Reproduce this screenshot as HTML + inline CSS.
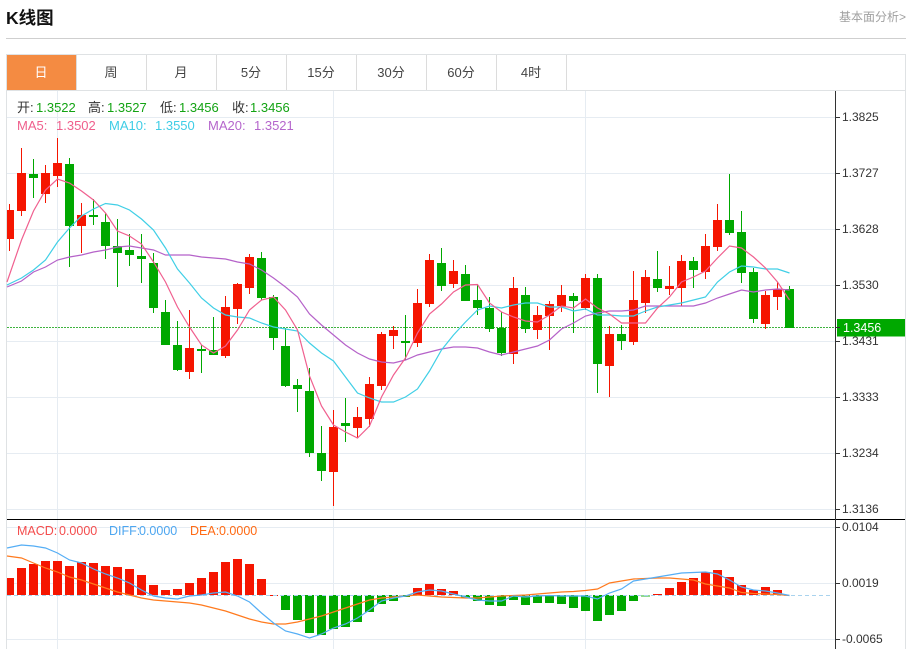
<!DOCTYPE html>
<html lang="zh"><head><meta charset="utf-8"><title>K线图</title>
<style>
html,body{margin:0;padding:0;background:#fff;width:911px;height:649px;overflow:hidden}
svg{display:block;position:absolute;left:0;top:0}
text{font-family:"Liberation Sans","Noto Sans CJK SC",sans-serif}
</style></head><body>
<svg width="911" height="649" viewBox="0 0 911 649" xmlns="http://www.w3.org/2000/svg">
<text x="6" y="24" font-size="17.5" font-weight="700" fill="#111">K线图</text>
<text x="906" y="21" font-size="12" fill="#a0a0a0" text-anchor="end">基本面分析&gt;</text>
<path d="M6 38.5H906" stroke="#cfcfcf" fill="none"/>
<!-- frame -->
<path d="M6.5 54V649M905.5 54V649M6 54.5H906M6 90.5H906" stroke="#dfe2e4" fill="none"/>
<path d="M76.5 55V90M146.5 55V90M216.5 55V90M286.5 55V90M356.5 55V90M426.5 55V90M496.5 55V90M566.5 55V90" stroke="#dcdcdc" fill="none"/>
<rect x="7" y="55" width="69" height="35" fill="#f48b42"/>
<g font-size="13" text-anchor="middle" fill="#444">
<text x="41" y="77" fill="#fff">日</text><text x="111" y="77">周</text><text x="181" y="77">月</text><text x="251" y="77">5分</text><text x="321" y="77">15分</text><text x="391" y="77">30分</text><text x="461" y="77">60分</text><text x="531" y="77">4时</text>
</g>
<!-- grid -->
<path d="M7 117.5H835M7 173.5H835M7 229.5H835M7 285.5H835M7 341.5H835M7 397.5H835M7 453.5H835M7 509.5H835M7 527.5H835M7 583.5H835M7 639.5H835M57.5 91V649M333.5 91V649M585.5 91V649" stroke="#e6ecf2" fill="none"/>
<!-- last price dotted -->
<path d="M7 327.5H835" stroke="#3fb33f" stroke-dasharray="2 1" fill="none"/>
<!-- candles red -->
<path fill="none" stroke="#f51500" d="M9.5 204V251M21.5 148V216M45.5 165V203M57.5 138V187M81.5 203V253M189.5 310V379M225.5 296V358M237.5 283V324M249.5 254V294M333.5 410V506M357.5 407V438M369.5 377V427M381.5 332V390M393.5 326V349M417.5 289V347M429.5 254V307M453.5 260V288M513.5 277V364M537.5 306V339M549.5 301V350M561.5 285V312M585.5 274V310M609.5 326V397M633.5 271V345M645.5 270V313M669.5 266V295M681.5 255V306M705.5 234V279M717.5 204V251M765.5 291V329M777.5 282V310"/>
<path fill="#f51500" d="M7 210h7V239h-7zM17 173h9V211h-9zM41 173h9V194h-9zM53 163h9V176h-9zM77 215h9V226h-9zM185 348h9V372h-9zM221 307h9V356h-9zM233 284h9V309h-9zM245 257h9V288h-9zM329 427h9V472h-9zM353 417h9V428h-9zM365 384h9V419h-9zM377 334h9V386h-9zM389 330h9V336h-9zM413 303h9V343h-9zM425 260h9V304h-9zM449 271h9V284h-9zM509 288h9V354h-9zM533 315h9V330h-9zM545 304h9V316h-9zM557 295h9V306h-9zM581 278h9V308h-9zM605 334h9V366h-9zM629 300h9V342h-9zM641 277h9V303h-9zM665 286h9V289h-9zM677 261h9V288h-9zM701 246h9V272h-9zM713 220h9V247h-9zM761 295h9V324h-9zM773 289h9V297h-9z"/>
<!-- candles green -->
<path fill="none" stroke="#00a800" d="M33.5 159V198M69.5 158V267M93.5 199V225M105.5 213V259M117.5 219V287M129.5 234V266M141.5 234V283M153.5 253V313M165.5 300V345M177.5 321V371M201.5 345V373M213.5 317V355M261.5 252V300M273.5 295V350M285.5 328V387M297.5 379V412M309.5 368V457M321.5 426V481M345.5 398V442M405.5 315V360M441.5 248V291M465.5 265V301M477.5 285V315M489.5 297V332M501.5 312V356M525.5 287V333M573.5 293V333M597.5 274V393M621.5 325V350M657.5 251V292M693.5 257V288M729.5 174V235M741.5 211V283M753.5 268V323M789.5 286V328"/>
<path fill="#00a800" d="M29 174h9V178h-9zM65 164h9V226h-9zM89 215h9V217h-9zM101 222h9V246h-9zM113 246h9V253h-9zM125 250h9V255h-9zM137 256h9V259h-9zM149 263h9V308h-9zM161 312h9V345h-9zM173 345h9V370h-9zM197 349h9V351h-9zM209 350h9V355h-9zM257 258h9V298h-9zM269 297h9V338h-9zM281 346h9V386h-9zM293 385h9V389h-9zM305 391h9V453h-9zM317 453h9V471h-9zM341 423h9V426h-9zM401 341h9V343h-9zM437 263h9V286h-9zM461 274h9V301h-9zM473 300h9V308h-9zM485 308h9V329h-9zM497 328h9V353h-9zM521 295h9V329h-9zM569 296h9V301h-9zM593 278h9V364h-9zM617 334h9V341h-9zM653 279h9V288h-9zM689 261h9V270h-9zM725 220h9V233h-9zM737 232h9V273h-9zM749 272h9V319h-9zM785 289h9V328h-9z"/>
<!-- MA lines -->
<path fill="none" stroke="#b562c9" stroke-width="1.2" d="M7 287L21.5 281 33.5 272 45.5 267 57.5 260 69.5 257 81.5 255 93.5 252 105.5 250 117.5 247 129.5 246 141.5 248 153.5 250 165.5 255 177.5 255 189.5 255 201.5 257 213.5 258 225.5 259 237.5 262 249.5 264 261.5 270 273.5 278 285.5 287 297.5 297 309.5 314 321.5 325 333.5 335 345.5 345 357.5 353 369.5 359 381.5 362 393.5 363 405.5 360 417.5 355 429.5 352 441.5 349 453.5 347 465.5 347 477.5 348 489.5 352 501.5 355 513.5 352 525.5 349 537.5 346 549.5 340 561.5 329 573.5 323 585.5 316 597.5 313 609.5 311 621.5 311 633.5 310 645.5 306 657.5 306 669.5 306 681.5 306 693.5 306 705.5 303 717.5 298 729.5 294 741.5 290 753.5 292 765.5 290 777.5 289 789.5 290"/>
<path fill="none" stroke="#40cfe6" stroke-width="1.2" d="M7 285L21.5 278 33.5 270 45.5 260 57.5 242 69.5 228 81.5 216 93.5 209 105.5 203.5 117.5 205 129.5 210 141.5 219 153.5 230 165.5 248 177.5 269 189.5 283 201.5 298 213.5 308 225.5 315 237.5 317 249.5 318 261.5 323 273.5 327 285.5 329 297.5 331 309.5 343 321.5 353 333.5 361 345.5 377 357.5 393 369.5 398 381.5 402 393.5 402 405.5 397 417.5 389 429.5 371 441.5 350 453.5 335 465.5 322 477.5 310 489.5 306 501.5 308 513.5 305 525.5 303 537.5 303 549.5 307 561.5 307 573.5 311 585.5 309 597.5 315 609.5 315 621.5 316 633.5 316 645.5 311 657.5 307 669.5 305 681.5 303 693.5 300 705.5 297 717.5 282 729.5 272 741.5 266 753.5 267 765.5 269 777.5 269 789.5 273"/>
<path fill="none" stroke="#f0608f" stroke-width="1.2" d="M7 282L21.5 240 33.5 211 45.5 190 57.5 179 69.5 183 81.5 191 93.5 200 105.5 213 117.5 231 129.5 236 141.5 244 153.5 262 165.5 282 177.5 307 189.5 327 201.5 345 213.5 353 225.5 346 237.5 330 249.5 310 261.5 300 273.5 297 285.5 310 297.5 330 309.5 376 321.5 406 333.5 425 345.5 432 357.5 438 369.5 426 381.5 397 393.5 375 405.5 358 417.5 333 429.5 314 441.5 304 453.5 292 465.5 285 477.5 284.5 489.5 303 501.5 312 513.5 317 525.5 321 537.5 322 549.5 315 561.5 306 573.5 308 585.5 299 597.5 308 609.5 314 621.5 323 633.5 323 645.5 323 657.5 308 669.5 297 681.5 282 693.5 277 705.5 271 717.5 258 729.5 246 741.5 248 753.5 257 765.5 268 777.5 282 789.5 300"/>
<!-- MACD bars -->
<path fill="#f51500" d="M7 578h7V595h-7zM17 568h9V595h-9zM29 564h9V595h-9zM41 561h9V595h-9zM53 561h9V595h-9zM65 566h9V595h-9zM77 562h9V595h-9zM89 563h9V595h-9zM101 566h9V595h-9zM113 567h9V595h-9zM125 569h9V595h-9zM137 575h9V595h-9zM149 585h9V595h-9zM161 590h9V595h-9zM173 589h9V595h-9zM185 583h9V595h-9zM197 578h9V595h-9zM209 572h9V595h-9zM221 562h9V595h-9zM233 559h9V595h-9zM245 564h9V595h-9zM257 579h9V595h-9zM269 595h9V596h-9zM413 588h9V595h-9zM425 584h9V595h-9zM437 589h9V595h-9zM449 591h9V595h-9zM653 594h9V595h-9zM665 588h9V595h-9zM677 582h9V595h-9zM689 578h9V595h-9zM701 572h9V595h-9zM713 570h9V595h-9zM725 577h9V595h-9zM737 585h9V595h-9zM749 590h9V595h-9zM761 587h9V595h-9zM773 590h9V595h-9z"/>
<path fill="#00a800" d="M281 595h9V610h-9zM293 595h9V620h-9zM305 595h9V633h-9zM317 595h9V635h-9zM329 595h9V629h-9zM341 595h9V627h-9zM353 595h9V622h-9zM365 595h9V612h-9zM377 595h9V604h-9zM389 595h9V601h-9zM401 595h9V597h-9zM461 595h9V598h-9zM473 595h9V601h-9zM485 595h9V605h-9zM497 595h9V606h-9zM509 595h9V600h-9zM521 595h9V605h-9zM533 595h9V603h-9zM545 595h9V603h-9zM557 595h9V604h-9zM569 595h9V608h-9zM581 595h9V611h-9zM593 595h9V621h-9zM605 595h9V615h-9zM617 595h9V611h-9zM629 595h9V601h-9z"/>
<path d="M641 595h9v2h-9z" fill="#8fd98f"/>
<path d="M7 595.5H833" stroke="#a9d3ee" stroke-dasharray="4 3" fill="none"/>
<!-- DIFF / DEA -->
<path fill="none" stroke="#ff7a1e" stroke-width="1.2" d="M7 556L21.5 558 33.5 563 45.5 568 57.5 572 69.5 577 81.5 580 93.5 584 105.5 588 117.5 592 129.5 595 141.5 598 153.5 600 165.5 601 177.5 602 189.5 603 201.5 605 213.5 608 225.5 611 237.5 615 249.5 619 261.5 622 273.5 624 285.5 624 297.5 622 309.5 619 321.5 616 333.5 612 345.5 608 357.5 604 369.5 600 381.5 598 393.5 597 405.5 596 417.5 595 429.5 596 441.5 597 453.5 597.5 465.5 598 477.5 598 489.5 597 501.5 596 513.5 595.5 525.5 595 537.5 594 549.5 593 561.5 592 573.5 591.5 585.5 590.5 597.5 589 609.5 583 621.5 581 633.5 579 645.5 578.5 657.5 578 669.5 578 681.5 579 693.5 580 705.5 584 717.5 586 729.5 588 741.5 592.5 753.5 593.5 765.5 594 777.5 594.5 789.5 595.5"/>
<path fill="none" stroke="#55aef5" stroke-width="1.2" d="M7 548L21.5 545 33.5 546 45.5 548 57.5 553 69.5 560 81.5 563 93.5 569 105.5 574 117.5 578 129.5 583 141.5 590 153.5 596 165.5 598 177.5 599 189.5 596 201.5 595 213.5 593 225.5 592 237.5 596 249.5 602 261.5 613 273.5 623 285.5 631 297.5 634 309.5 638 321.5 634 333.5 628 345.5 624 357.5 618 369.5 610 381.5 601 393.5 598 405.5 596 417.5 592 429.5 590 441.5 591 453.5 594 465.5 597 477.5 600 489.5 601 501.5 601 513.5 596 525.5 597 537.5 596 549.5 595.5 561.5 596 573.5 596 585.5 596 597.5 599 609.5 593 621.5 589 633.5 581 645.5 579 657.5 577 669.5 575 681.5 573 693.5 572.5 705.5 572 717.5 574 729.5 580 741.5 587 753.5 590 765.5 591 777.5 593 789.5 595.5"/>
<!-- axis -->
<path d="M7 519.5H905" stroke="#000" fill="none"/>
<path d="M835.5 91V649" stroke="#333" fill="none"/>
<path d="M836 117.5h4M836 173.5h4M836 229.5h4M836 285.5h4M836 341.5h4M836 397.5h4M836 453.5h4M836 509.5h4M836 527.5h4M836 583.5h4M836 639.5h4" stroke="#333" fill="none"/>
<g font-size="12" fill="#333">
<text x="842" y="121">1.3825</text><text x="842" y="177">1.3727</text><text x="842" y="233">1.3628</text><text x="842" y="289">1.3530</text><text x="842" y="345">1.3431</text><text x="842" y="401">1.3333</text><text x="842" y="457">1.3234</text><text x="842" y="513">1.3136</text><text x="842" y="531">0.0104</text><text x="842" y="587">0.0019</text><text x="842" y="643">-0.0065</text>
</g>
<rect x="837" y="319" width="68" height="17.5" fill="#00a800"/>
<path d="M836 327.5h4" stroke="#333" fill="none"/>
<text x="843" y="332" font-size="12.5" fill="#fff">1.3456</text>
<!-- legends -->
<g font-size="13">
<text x="17" y="112" fill="#333">开:</text><text x="36" y="112" fill="#13a313">1.3522</text>
<text x="88" y="112" fill="#333">高:</text><text x="107" y="112" fill="#13a313">1.3527</text>
<text x="160" y="112" fill="#333">低:</text><text x="179" y="112" fill="#13a313">1.3456</text>
<text x="232" y="112" fill="#333">收:</text><text x="250" y="112" fill="#13a313">1.3456</text>
<text x="17" y="130" fill="#ef5f8c">MA5:</text><text x="56" y="130" fill="#ef5f8c">1.3502</text>
<text x="109" y="130" fill="#3fcde6">MA10:</text><text x="155" y="130" fill="#3fcde6">1.3550</text>
<text x="208" y="130" fill="#b566cc">MA20:</text><text x="254" y="130" fill="#b566cc">1.3521</text>
</g>
<g font-size="12.5">
<text x="17" y="535" fill="#f44d4d">MACD:</text><text x="59" y="535" fill="#f44d4d">0.0000</text>
<text x="109" y="535" fill="#4da6f0">DIFF:</text><text x="139" y="535" fill="#4da6f0">0.0000</text>
<text x="190" y="535" fill="#ff6a13">DEA:</text><text x="219" y="535" fill="#ff6a13">0.0000</text>
</g>
</svg>
</body></html>
